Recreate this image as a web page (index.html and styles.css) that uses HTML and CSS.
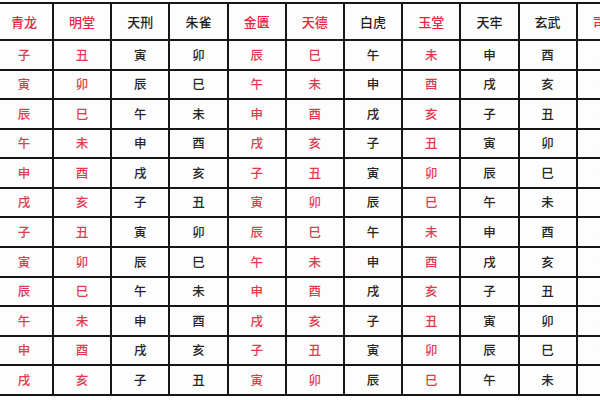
FILE: index.html
```html
<!DOCTYPE html>
<html lang="zh">
<head>
<meta charset="utf-8">
<title>黄道黑道表</title>
<link rel="stylesheet" href="styles.css">
</head>
<body>
<div class="table" id="tbl"></div>
<script>
(function () {
  var heads = ["青龙","明堂","天刑","朱雀","金匮","天德","白虎","玉堂","天牢","玄武","司命"];
  var red = [1,1,0,0,1,1,0,1,0,0,1];
  var br = ["子","丑","寅","卯","辰","巳","午","未","申","酉","戌","亥"];
  var t = document.getElementById("tbl");
  var html = "";
  for (var c = 0; c < heads.length; c++) {
    html += '<div class="cell head' + (red[c] ? ' red' : '') + '">' + heads[c] + '</div>';
  }
  for (var r = 0; r < 12; r++) {
    var start = (r % 6) * 2;
    for (var c = 0; c < heads.length; c++) {
      html += '<div class="cell' + (red[c] ? ' red' : '') + '">' + br[(start + c) % 12] + '</div>';
    }
  }
  t.innerHTML = html;
})();
</script>
</body>
</html>
```
FILE: styles.css
```css
html, body {
  margin: 0;
  padding: 0;
  background: #ffffff;
  overflow: hidden;
}
body {
  width: 600px;
  height: 400px;
  font-family: "Noto Sans CJK SC", "Noto Sans CJK TC", sans-serif;
}
.table {
  display: grid;
  grid-template-columns: repeat(11, 56.2px);
  grid-template-rows: 35px repeat(12, 27.58px);
  gap: 2px;
  padding: 2px;
  background: #161616;
  width: max-content;
  margin: 2px 0 0 -6.2px;
}
.cell {
  background: #fdfdfd;
  display: flex;
  align-items: center;
  justify-content: center;
  font-size: 12.5px;
  font-weight: 500;
  color: #262626;
  line-height: 1;
}
.cell.head {
  font-size: 13px;
  color: #1e1e1e;
}
.cell.red {
  color: #e23a4e;
}
.cell.head.red {
  color: #e8283e;
}
```
